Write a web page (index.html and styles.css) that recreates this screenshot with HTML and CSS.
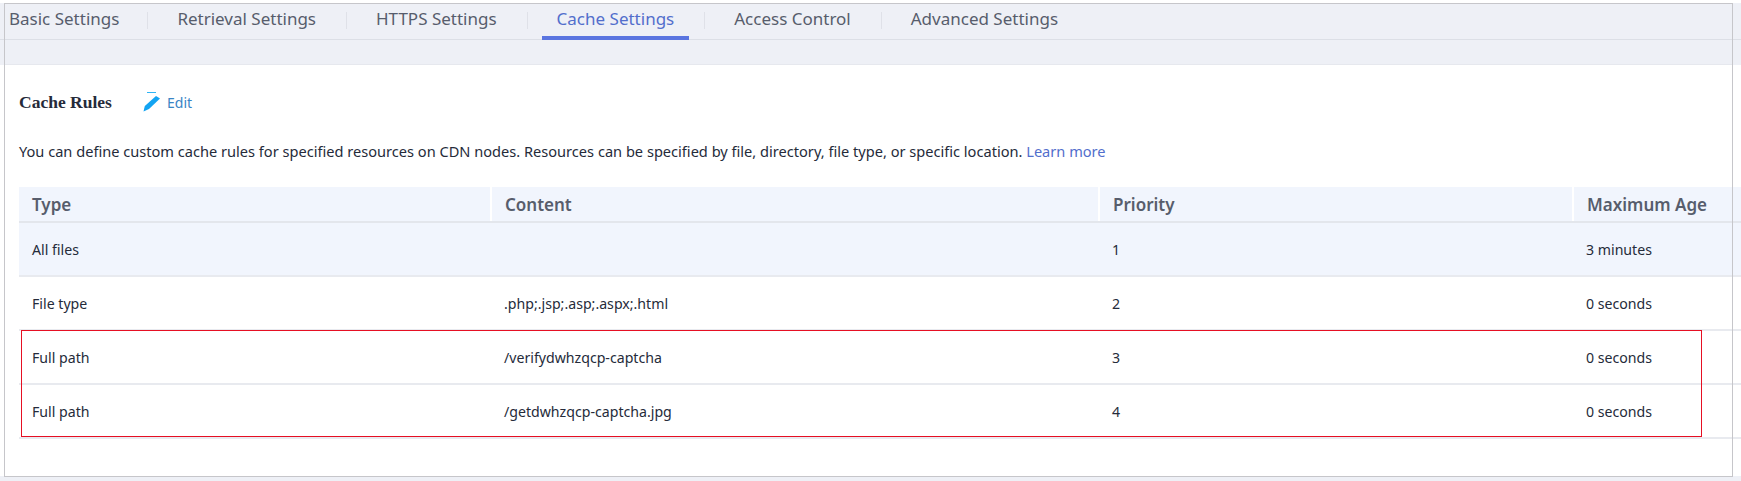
FILE: index.html
```html
<!DOCTYPE html>
<html lang="en">
<head>
  <meta charset="UTF-8" />
  <title>Cache Settings</title>
  <link rel="stylesheet" href="styles.css">
</head>
<body>

  <div class="frame">
    <div class="tabs-band">
      <div class="tabs">
        <a class="tab">Basic Settings</a>
        <a class="tab">Retrieval Settings</a>
        <a class="tab">HTTPS Settings</a>
        <a class="tab active">Cache Settings</a>
        <a class="tab">Access Control</a>
        <a class="tab">Advanced Settings</a>
      </div>
    </div>

    <div class="panel">
      <div class="title-row">
        <h2>Cache Rules</h2>
        <a class="edit">
          <svg class="edit-icon" width="18" height="20" viewBox="0 0 18 20">
            <path d="M4 .5H13" stroke="#2db4f5" stroke-width="1" fill="none"/>
            <path d="M13 4 17 6.5 6 17 .5 19.5 1.8 14Z" fill="#13a4f2"/>
          </svg>
          Edit
        </a>
      </div>

      <p class="desc">You can define custom cache rules for specified resources on CDN nodes. Resources can be specified by file, directory, file type, or specific location. <a class="link">Learn more</a></p>

      <div class="table-wrap">
        <table>
          <colgroup>
            <col class="col-type">
            <col class="col-content">
            <col class="col-priority">
            <col class="col-age">
          </colgroup>
          <thead>
            <tr><th>Type</th><th>Content</th><th>Priority</th><th>Maximum Age</th></tr>
          </thead>
          <tbody>
            <tr class="hover"><td>All files</td><td></td><td>1</td><td>3 minutes</td></tr>
            <tr><td>File type</td><td>.php;.jsp;.asp;.aspx;.html</td><td>2</td><td>0 seconds</td></tr>
            <tr><td>Full path</td><td>/verifydwhzqcp-captcha</td><td>3</td><td>0 seconds</td></tr>
            <tr><td>Full path</td><td>/getdwhzqcp-captcha.jpg</td><td>4</td><td>0 seconds</td></tr>
          </tbody>
        </table>
        <div class="red-box"></div>
      </div>
    </div>
  </div>

</body>
</html>
```

FILE: styles.css
```css
/* Reset & base */
* {
  box-sizing: border-box;
}
html, body {
  margin: 0;
  padding: 0;
}
body {
  width: 1741px;
  height: 481px;
  overflow: hidden;
  padding: 3px 8px 4px 4px;
  background: linear-gradient(#fff 3px, #eef0f6 3px, #eef0f6 65px, #fff 65px, #fff 476px, #eef0f6 476px);
  font-family: "Noto Sans", "Open Sans", sans-serif;
  font-size: 14px;
  color: #252b3a;
}
.frame {
  position: relative;
  height: 474px;
  border: 1px solid #c6c6ca;
  background: #fff;
}
/* border again on top, the table and tab line run past it */
.frame::after {
  content: "";
  position: absolute;
  inset: -1px;
  border: 1px solid #c6c6ca;
  pointer-events: none;
}

/* Tabs */
.tabs-band {
  height: 61px;
  background: #eef0f6;
  border-bottom: 1px solid #e6e8ee;
}
.tabs {
  display: flex;
  height: 36px;
  width: 1741px;
  margin-left: -5px;
  border-bottom: 1px solid #dcdfe6;
}
.tab {
  position: relative;
  height: 36px;
  margin-left: -6px;
  margin-right: 36px;
  padding: 3px 15px 0;
  font-size: 17px;
  line-height: 23px;
  color: #575d6c;
  white-space: nowrap;
}
.tab:first-child {
  margin-right: 34px;
}
.tab + .tab::before {
  content: "";
  position: absolute;
  left: -15px;
  top: 8px;
  width: 1px;
  height: 17px;
  background: #dfe1e8;
}
.tab.active {
  color: #526ecc;
  border-bottom: 4px solid #5a75e0;
}

/* Panel */
.panel {
  padding: 0 0 0 14px;
}
.title-row {
  display: flex;
  align-items: center;
  height: 24px;
  margin-top: 25px;
}
h2 {
  margin: 0;
  width: 124px;
  font-family: "Liberation Serif", serif;
  font-size: 17.5px;
  font-weight: 700;
  color: #252b3a;
}
.edit {
  display: flex;
  align-items: center;
  gap: 6px;
  color: #3a84c5;
  font-size: 14px;
}
.desc {
  margin: 27px 0 0;
  line-height: 20px;
  font-size: 14.6px;
  white-space: nowrap;
}
.link {
  color: #526ecc;
}

/* Table */
.table-wrap {
  position: relative;
  margin-top: 26px;
}
table {
  width: 1722px;
  border-collapse: collapse;
  table-layout: fixed;
  font-size: 14.15px;
}
.col-type { width: 472px; }
.col-content { width: 608px; }
.col-priority { width: 474px; }
.col-age { width: 168px; }
th {
  height: 35px;
  padding: 0 13px;
  text-align: left;
  font-size: 17px;
  font-weight: 600;
  color: #575d6c;
  background: #f1f5fd;
  border-bottom: 2px solid #e3e6ec;
  border-left: 2px solid #fff;
}
th:first-child {
  border-left: 0;
}
td {
  height: 54px;
  padding: 0 13px;
  border-bottom: 2px solid #e8eaef;
}
.hover td {
  background: #f1f5fd;
}
.red-box {
  position: absolute;
  left: 2px;
  top: 143px;
  width: 1681px;
  height: 107px;
  border: 1px solid #e60f23;
}
```
